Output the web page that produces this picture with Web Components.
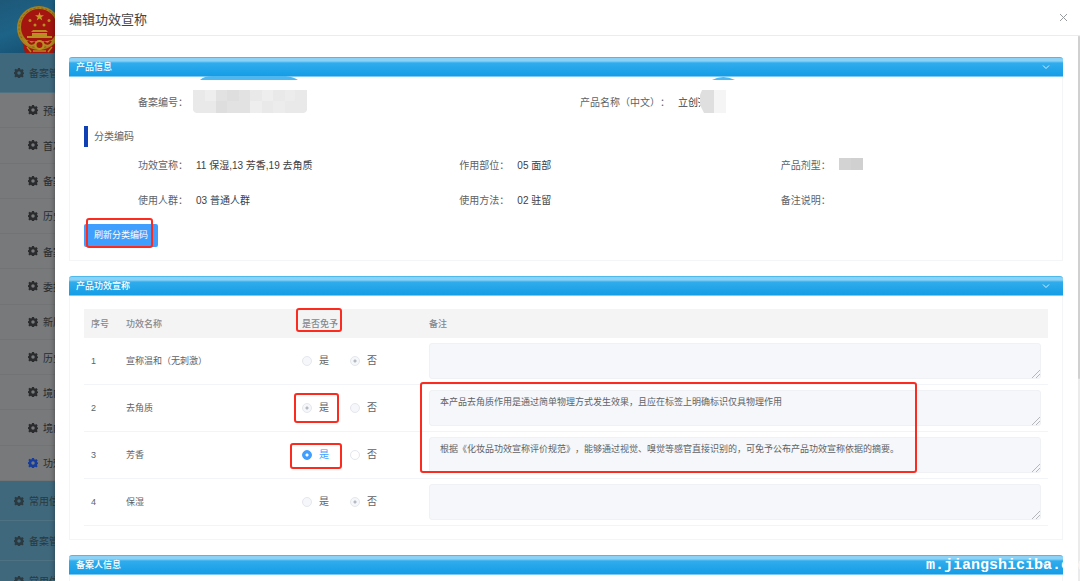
<!DOCTYPE html>
<html lang="zh-CN">
<head>
<meta charset="utf-8">
<title>编辑功效宣称</title>
<style>
    html, body {
        margin: 0;
        height: 100%;
        overflow: hidden;
        background: #fff;
    }
    body {
        font-family: "Liberation Sans", "Noto Sans CJK SC", sans-serif;
        font-size: 10px;
        color: #606266;
        text-spacing-trim: space-all;
    }
</style>
</head>
<body>
<claim-page></claim-page>

<script>
// shared helper: attach an open root and fill it
function render(el, html) {
    const root = el.attachShadow({ mode: 'open' });
    const template = document.createElement('template');
    template.innerHTML = html;
    root.appendChild(template.content.cloneNode(true));
    return root;
}

class GearIcon extends HTMLElement {
    constructor() {
        super();
        render(this, `
            <style>
                :host { display: block; flex: none; width: 10px; height: 10px; }
                svg { display: block; width: 100%; height: 100%; }
            </style>
            <svg viewBox="0 0 20 20" fill="currentColor" fill-rule="evenodd" aria-hidden="true">
                <path d="M8 0h4l.5 2.7 1.8.8L16.600 2l2.800 2.800-1.500 2.200.7 1.800L20 9v3l-1.500.4-.7 1.800 1.500 2.300-2.700 2.700-2.300-1.500-1.800.7L12 20H8l-.5-1.700-1.800-.7-2.300 1.500L.7 16.400l1.500-2.200-.7-1.800L0 12V8.500l1.500-.5.7-1.800L.7 4 3.400 1.500l2.300 1.500 1.800-.7zM10 6.500a3.500 3.500 0 1 0 0 7 3.500 3.500 0 0 0 0-7z"/>
            </svg>
        `);
    }
}
customElements.define('gear-icon', GearIcon);

class StateEmblem extends HTMLElement {
    constructor() {
        super();
        render(this, `
            <style>
                :host { display: block; width: 47px; height: 47px; }
                svg { display: block; }
            </style>
            <svg width="47" height="47" viewBox="0 0 47 47" aria-hidden="true">
                <path d="M6 34l3 13h29l3-13z" fill="#a5170f"/>
                <circle cx="23" cy="22" r="22" fill="#a8801c"/>
                <circle cx="23" cy="22" r="20" fill="none" stroke="#7d6418" stroke-width="1" stroke-dasharray="2 2"/>
                <circle cx="23" cy="21" r="18" fill="#a3150e"/>
                <path d="M23.500 6l1.100 3.200H28l-2.700 2 1 3.300-2.800-2-2.800 2 1-3.300-2.700-2h3.400z" fill="#c39a24"/>
                <g fill="#b98f22">
                    <circle cx="14" cy="14.500" r="1.500"/><circle cx="33" cy="14.500" r="1.500"/>
                    <circle cx="19" cy="19" r="1.500"/><circle cx="28" cy="19" r="1.500"/>
                    <path d="M17 24h13l2 2H15zM16 27h15v4H16zM11 30h25v2H11z"/>
                </g>
                <path d="M6 33q17 5 34 0l-3 5q-5 5-9 1-5 4-9 0-5 3-9-1z" fill="#b28a20"/>
                <path d="M12 35q3 5 7 1M35 35q-3 5-7 1" stroke="#a5170f" stroke-width="2" fill="none"/>
                <circle cx="23.500" cy="39" r="4" fill="#a5170f" stroke="#b98f22" stroke-width="2"/>
                <path d="M11 41l4 5M36 41l-4 5M17 45h13" stroke="#b28a20" stroke-width="1.500" fill="none"/>
            </svg>
        `);
    }
}
customElements.define('state-emblem', StateEmblem);

class SideItem extends HTMLElement {
    constructor() {
        super();
        render(this, `
            <style>
                :host {
                    display: block;
                    box-sizing: border-box;
                    border-bottom: 1px solid #717375;
                    color: #292b2d;
                }
                :host([top]) {
                    height: 40px;
                    background: #3f687c;
                    border-bottom-color: #4f7282;
                    color: #2b3940;
                }
                a {
                    display: flex;
                    align-items: center;
                    gap: 5px;
                    height: 100%;
                    padding-left: 28px;
                    color: inherit;
                    text-decoration: none;
                    white-space: nowrap;
                }
                :host([top]) a { padding-left: 14px; }
                :host([active]) gear-icon { color: #173c9b; }
            </style>
            <a href="#"><gear-icon></gear-icon><slot></slot></a>
        `);
    }
}
customElements.define('side-item', SideItem);

class SideMenu extends HTMLElement {
    constructor() {
        super();
        render(this, `
            <style>
                :host {
                    display: block;
                    min-width: 0;
                    overflow: hidden;
                    background: #77797b;
                }
                .logo {
                    box-sizing: border-box;
                    height: 53px;
                    padding: 6px 0 0 16px;
                    overflow: hidden;
                    background: linear-gradient(160deg, #1e5878, #1d6388 50%, #144c6d);
                }
                .group { display: grid; grid-auto-rows: 1fr; height: 388px; }
            </style>
            <div class="logo"><state-emblem></state-emblem></div>
            <side-item top>备案管理</side-item>
            <div class="group">
                <side-item>预约</side-item>
                <side-item>首次</side-item>
                <side-item>备案</side-item>
                <side-item>历史</side-item>
                <side-item>备案</side-item>
                <side-item>委托</side-item>
                <side-item>新原料</side-item>
                <side-item>历史</side-item>
                <side-item>境内</side-item>
                <side-item>境内</side-item>
                <side-item active>功效</side-item>
            </div>
            <side-item top>常用信息</side-item>
            <side-item top>备案管理</side-item>
            <side-item top>常用信息</side-item>
        `);
    }
}
customElements.define('side-menu', SideMenu);

class FoldPanel extends HTMLElement {
    constructor() {
        super();
        const root = render(this, `
            <style>
                :host { display: block; flex: none; }
                header {
                    display: flex;
                    align-items: center;
                    justify-content: space-between;
                    box-sizing: border-box;
                    height: 20px;
                    padding: 0 13px 0 7px;
                    border-top: 1px solid #4db9ed;
                    border-bottom: 1px solid #7fcaf3;
                    border-radius: 3px 3px 0 0;
                    background: linear-gradient(#8bd2f6 0 3px, #5bc0f2 4px, #30acec 5px, #149de6);
                    color: #fff;
                }
                h2 { margin: 0; font-size: 9px; line-height: 18px; font-weight: 500; }
                button {
                    display: block;
                    padding: 0;
                    border: 0;
                    background: none;
                    color: #d5effc;
                }
                svg { display: block; }
                .body {
                    padding: 13px 14px;
                    border: 1px solid #f4f5f7;
                    border-top: 0;
                }
            </style>
            <header>
                <h2></h2>
                <button type="button" aria-label="折叠">
                    <svg width="8" height="6" viewBox="0 0 8 6" fill="none" stroke="currentColor"><path d="M1 1.500l3 3 3-3"/></svg>
                </button>
            </header>
            <div class="body"><slot></slot></div>
        `);
        root.querySelector('h2').textContent = this.getAttribute('heading');
    }
}
customElements.define('fold-panel', FoldPanel);

class InfoField extends HTMLElement {
    constructor() {
        super();
        const root = render(this, `
            <style>
                :host {
                    display: flex;
                    align-items: center;
                    box-sizing: border-box;
                    height: 24px;
                    padding-bottom: 2px;
                    min-width: 0;
                }
                .label {
                    flex: none;
                    box-sizing: border-box;
                    width: 112px;
                    padding-right: 8px;
                    text-align: right;
                    white-space: nowrap;
                }
                .value { display: flex; align-items: center; color: #3c3e42; white-space: nowrap; }
            </style>
            <span class="label"></span>
            <span class="value"><slot></slot></span>
        `);
        root.querySelector('.label').textContent = this.getAttribute('label') + '：';
    }
}
customElements.define('info-field', InfoField);

class ProductInfo extends HTMLElement {
    constructor() {
        super();
        render(this, `
            <style>
                :host { display: block; position: relative; }
                .two, .three { display: grid; }
                .two { grid-template-columns: 1fr 1fr; }
                .three { grid-template-columns: repeat(3, 1fr); row-gap: 11px; }
                h3 {
                    margin: 12px 0 6px;
                    padding-left: 6px;
                    border-left: 4px solid #0f40b4;
                    font-size: 10px;
                    line-height: 21px;
                    font-weight: 400;
                }
                svg { display: block; }
                .code { margin-left: -3px; }
                button {
                    display: block;
                    height: 23px;
                    margin-top: 12px;
                    padding: 0 10px;
                    border: 0;
                    border-radius: 2px;
                    background: #409eff;
                    color: #fff;
                    font-family: inherit;
                    font-size: 9px;
                    line-height: 23px;
                }
                /* tab edges that peek out below the panel header */
                .arc { position: absolute; top: -14px; }
                .arc.wide { left: 116px; }
                .arc.small { left: 628px; }
            </style>
            <svg class="arc wide" width="98" height="4" viewBox="0 0 98 4"><path d="M0 4Q4 0 12 0H86Q94 1 98 4z" fill="#4fb7f0"/></svg>
            <svg class="arc small" width="23" height="4" viewBox="0 0 23 4"><path d="M0 4Q11 -2 23 4z" fill="#4fb7f0"/></svg>
            <div class="two">
                <info-field label="备案编号">
                    <svg class="code" width="114" height="23" viewBox="0 0 114 23">
                        <path d="M0 0H114V20Q113 23 110 23H4Q1 23 0 20z" fill="#e9e9e9"/>
                        <path d="M12 0h11v11H12zM69 0h11v11H69zM57 11h12v12H57z" fill="#eee"/>
                        <path d="M23 0h34v23H23z" fill="#e2e2e2"/>
                        <path d="M34 0h12v11H34zM23 11h11v12H23z" fill="#dedede"/>
                        <path d="M92 0h10v11H92zM80 11h12v12H80z" fill="#ececec"/>
                    </svg>
                </info-field>
                <info-field label="产品名称（中文）">立创
                    <svg width="28" height="23" viewBox="0 0 28 23">
                        <path d="M0 8l3 1M0 12l3 1M1 17l2-3" stroke="#606266"/>
                        <path d="M4 0H16V23H6L2 15V5z" fill="#dfdfdf"/>
                        <path d="M16 0h12v23H16z" fill="#f5f5f5"/>
                    </svg>
                </info-field>
            </div>
            <h3>分类编码</h3>
            <div class="three">
                <info-field label="功效宣称">11 保湿,13 芳香,19 去角质</info-field>
                <info-field label="作用部位">05 面部</info-field>
                <info-field label="产品剂型">
                    <svg width="24" height="12" viewBox="0 0 24 12"><path d="M0 0h24v12H0z" fill="#d3d3d3"/><path d="M12 0h12v12H12z" fill="#d0d0d0"/></svg>
                </info-field>
                <info-field label="使用人群">03 普通人群</info-field>
                <info-field label="使用方法">02 驻留</info-field>
                <info-field label="备注说明"></info-field>
            </div>
            <button type="button">刷新分类编码</button>
        `);
    }
}
customElements.define('product-info', ProductInfo);

const CLAIMS = [
    { name: '宣称温和（无刺激）', exempt: false, locked: true, note: '' },
    { name: '去角质', exempt: true, locked: true, note: '本产品去角质作用是通过简单物理方式发生效果，且应在标签上明确标识仅具物理作用' },
    { name: '芳香', exempt: true, locked: false, note: '根据《化妆品功效宣称评价规范》，能够通过视觉、嗅觉等感官直接识别的，可免予公布产品功效宣称依据的摘要。' },
    { name: '保湿', exempt: false, locked: true, note: '' }
];

class ClaimTable extends HTMLElement {
    constructor() {
        super();
        const radio = (row, i, text, on) => `
            <label><input type="radio" name="exempt${i}" ${on ? 'checked' : ''} ${row.locked ? 'disabled' : ''}><span>${text}</span></label>`;
        const rows = CLAIMS.map((row, i) => `
            <tr>
                <td>${i + 1}</td>
                <td>${row.name}</td>
                <td><div class="choice">${radio(row, i, '是', row.exempt)}${radio(row, i, '否', !row.exempt)}</div></td>
                <td><textarea aria-label="备注 ${row.name}">${row.note}</textarea></td>
            </tr>`).join('');
        render(this, `
            <style>
                :host { display: block; }
                table {
                    width: 100%;
                    border-collapse: separate;
                    border-spacing: 0;
                    table-layout: fixed;
                    font-size: 9px;
                    line-height: 14px;
                }
                .no { width: 35px; }
                .name { width: 176px; }
                .pick { width: 127px; }
                th {
                    height: 29px;
                    box-sizing: border-box;
                    padding: 0 7px;
                    background: #f4f4f5;
                    color: #85888f;
                    font-weight: 500;
                    text-align: left;
                }
                td {
                    padding: 5px 7px;
                    border-bottom: 1px solid #f3f4f7;
                    vertical-align: middle;
                }
                .choice { display: flex; gap: 21px; font-size: 10px; }
                label { display: flex; align-items: center; gap: 7px; }
                input {
                    appearance: none;
                    box-sizing: border-box;
                    width: 10px;
                    height: 10px;
                    margin: 0;
                    border: 1px solid #e4e7ed;
                    border-radius: 50%;
                    background: #fff;
                }
                input:disabled { background: #f5f7fa; }
                input:disabled:checked { background: radial-gradient(circle, #b4b9c2 1px, #f5f7fa 2px); }
                input:enabled:checked {
                    border-color: #409eff;
                    background: radial-gradient(circle, #fff 1px, #409eff 2px);
                }
                input:enabled:checked + span { color: #409eff; }
                textarea {
                    display: block;
                    box-sizing: border-box;
                    width: 100%;
                    height: 36px;
                    padding: 4px 10px;
                    border: 1px solid #eff1f5;
                    border-radius: 3px;
                    background: #f5f7fa;
                    color: #606266;
                    font-family: inherit;
                    font-size: 9px;
                    line-height: 14px;
                    resize: vertical;
                    text-spacing-trim: space-all;
                }
                textarea::-webkit-resizer {
                    background: linear-gradient(135deg, transparent 5px, #b4b6ba 5px 6px, transparent 6px 8px, #b4b6ba 8px 9px, transparent 9px) right bottom / 8px 8px no-repeat;
                }
            </style>
            <table>
                <thead>
                    <tr><th class="no">序号</th><th class="name">功效名称</th><th class="pick">是否免予</th><th>备注</th></tr>
                </thead>
                <tbody>${rows}</tbody>
            </table>
        `);
    }
}
customElements.define('claim-table', ClaimTable);

class EditDrawer extends HTMLElement {
    constructor() {
        super();
        render(this, `
            <style>
                :host {
                    display: flex;
                    flex-direction: column;
                    min-width: 0;
                    min-height: 0;
                    background: #fff;
                    box-shadow: 0 0 5px rgba(0, 0, 0, .4);
                }
                header {
                    display: flex;
                    align-items: center;
                    justify-content: space-between;
                    flex: none;
                    height: 36px;
                    padding: 4px 12px 0 14px;
                    box-sizing: border-box;
                    border-bottom: 1px solid #ececec;
                }
                h1 { margin: 0; font-size: 13px; line-height: 20px; font-weight: 400; color: #444; }
                header button { padding: 0 0 4px; border: 0; background: none; color: #989ba0; }
                header svg { display: block; }
                .view { display: flex; flex: 1; min-height: 0; }
                .content {
                    display: flex;
                    flex-direction: column;
                    flex: 1;
                    gap: 15px;
                    min-width: 0;
                    padding: 21px 15px 0 14px;
                    overflow: hidden;
                }
                .bar { width: 2px; background: #ebebeb; }
                .thumb { height: 63%; border-radius: 1px; background: #d0d0d0; }
            </style>
            <header>
                <h1>编辑功效宣称</h1>
                <button type="button" aria-label="关闭">
                    <svg width="9" height="9" viewBox="0 0 9 9" fill="none" stroke="currentColor"><path d="M1 1l7 7M8 1l-7 7"/></svg>
                </button>
            </header>
            <div class="view">
                <div class="content"><slot></slot></div>
                <div class="bar"><div class="thumb"></div></div>
            </div>
        `);
    }
}
customElements.define('edit-drawer', EditDrawer);

// red frame drawn over the form; x, y, w, h in page pixels
class MarkFrame extends HTMLElement {
    constructor() {
        super();
        render(this, `
            <style>
                :host {
                    position: absolute;
                    box-sizing: border-box;
                    border: 2px solid #fc2b20;
                    border-radius: 3px;
                    pointer-events: none;
                }
            </style>
        `);
    }
    connectedCallback() {
        const [x, y, w, h] = this.getAttribute('box').split(' ');
        this.style.cssText = `left:${x}px;top:${y}px;width:${w}px;height:${h}px`;
    }
}
customElements.define('mark-frame', MarkFrame);

class ClaimPage extends HTMLElement {
    constructor() {
        super();
        render(this, `
            <style>
                :host {
                    display: grid;
                    grid-template-columns: 55px 1fr;
                    grid-template-rows: 100%;
                    position: relative;
                    height: 100vh;
                    overflow: hidden;
                }
                edit-drawer { position: relative; }
                .watermark {
                    position: absolute;
                    right: -8px;
                    bottom: 6px;
                    color: #fff;
                    font: bold 15px/18px "Liberation Mono", monospace;
                    white-space: nowrap;
                }
            </style>
            <side-menu></side-menu>
            <edit-drawer>
                <fold-panel heading="产品信息"><product-info></product-info></fold-panel>
                <fold-panel heading="产品功效宣称"><claim-table></claim-table></fold-panel>
                <fold-panel heading="备案人信息"></fold-panel>
            </edit-drawer>
            <mark-frame box="86 218 67 30"></mark-frame>
            <mark-frame box="296 308 46 24"></mark-frame>
            <mark-frame box="294 393 45 30"></mark-frame>
            <mark-frame box="290 443 52 26"></mark-frame>
            <mark-frame box="420 382 497 91"></mark-frame>
            <div class="watermark">m.jiangshiciba.com</div>
        `);
    }
}
customElements.define('claim-page', ClaimPage);
</script>
</body>
</html>
